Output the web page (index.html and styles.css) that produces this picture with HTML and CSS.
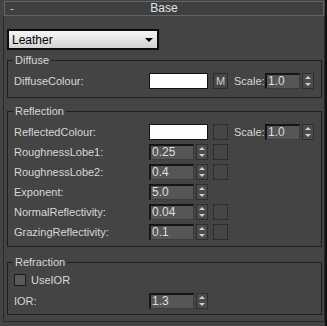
FILE: index.html
```html
<!DOCTYPE html>
<html lang="en">
<head>
    <meta charset="UTF-8">
    <meta name="viewport" content="width=device-width, initial-scale=1.0">
    <title>Base</title>
    <link rel="stylesheet" href="styles.css">
</head>
<body>
    <div class="panel">
        <div class="rollout-title">
            <span class="toggle">-</span>
            <span class="title">Base</span>
        </div>
        <div class="rollout-body">
            <div class="preset">
                <span>Leather</span>
                <span class="preset-arrow"></span>
            </div>

            <fieldset class="group diffuse">
                <legend>Diffuse</legend>
                <div class="row">
                    <span class="label">DiffuseColour:</span>
                    <span class="swatch"></span>
                    <span class="map-btn">M</span>
                    <span class="scale-label">Scale:</span>
                    <span class="spinner small"><span class="field">1.0</span><span class="arrows"></span></span>
                </div>
            </fieldset>

            <fieldset class="group reflection">
                <legend>Reflection</legend>
                <div class="row">
                    <span class="label">ReflectedColour:</span>
                    <span class="swatch"></span>
                    <span class="map-btn"></span>
                    <span class="scale-label">Scale:</span>
                    <span class="spinner small"><span class="field">1.0</span><span class="arrows"></span></span>
                </div>
                <div class="row">
                    <span class="label">RoughnessLobe1:</span>
                    <span class="spinner"><span class="field">0.25</span><span class="arrows"></span></span>
                    <span class="map-btn"></span>
                </div>
                <div class="row">
                    <span class="label">RoughnessLobe2:</span>
                    <span class="spinner"><span class="field">0.4</span><span class="arrows"></span></span>
                    <span class="map-btn"></span>
                </div>
                <div class="row">
                    <span class="label">Exponent:</span>
                    <span class="spinner"><span class="field">5.0</span><span class="arrows"></span></span>
                </div>
                <div class="row">
                    <span class="label">NormalReflectivity:</span>
                    <span class="spinner"><span class="field">0.04</span><span class="arrows"></span></span>
                    <span class="map-btn"></span>
                </div>
                <div class="row">
                    <span class="label">GrazingReflectivity:</span>
                    <span class="spinner"><span class="field">0.1</span><span class="arrows"></span></span>
                    <span class="map-btn"></span>
                </div>
            </fieldset>

            <fieldset class="group refraction">
                <legend>Refraction</legend>
                <label class="check-row">
                    <span class="checkbox"></span>
                    <span>UseIOR</span>
                </label>
                <div class="row">
                    <span class="label">IOR:</span>
                    <span class="spinner"><span class="field">1.3</span><span class="arrows"></span></span>
                </div>
            </fieldset>
        </div>
    </div>
</body>
</html>
```

FILE: styles.css
```css
html, body {
    margin: 0;
    padding: 0;
}
body {
    background-color: #111;
    font-family: "Liberation Sans", Arial, sans-serif;
    font-size: 11px;
    color: #d8d8d8;
}
.panel {
    width: 325px;
    height: 326px;
    background-color: #444;
    padding-top: 1px;
    box-sizing: border-box;
}
.rollout-title {
    display: flex;
    align-items: center;
    margin-left: 4px;
    width: 318px;
    height: 13px;
    border: 1px solid #646464;
    background-color: #3f3f3f;
}
.toggle {
    width: 12px;
    padding-left: 5px;
    line-height: 13px;
}
.title {
    flex: 1;
    text-align: center;
    margin-right: 17px;
    font-size: 12px;
    line-height: 13px;
    color: #dfe4ea;
}
.rollout-body {
    margin-left: 3px;
    width: 320px;
    border-left: 1px solid #2a2a2a;
    border-right: 1px solid #2a2a2a;
    border-bottom: 1px solid #2a2a2a;
    padding: 13px 0 6px;
}
.preset {
    margin-left: 3px;
    width: 145px;
    height: 17px;
    border: 2px solid #0c0c0c;
    background: linear-gradient(#f6f6f6, #d2d2d2);
    color: #000;
    font-size: 12px;
    display: flex;
    align-items: center;
    justify-content: space-between;
    padding-left: 3px;
}
.preset-arrow {
    width: 0;
    height: 0;
    margin-right: 4px;
    border-left: 4px solid transparent;
    border-right: 4px solid transparent;
    border-top: 4px solid #000;
}
.group {
    margin: 0 2px 0 3px;
    padding: 6px 0 8px 6px;
    border: 1px solid #1e1e1e;
    min-width: 0;
}
.group legend {
    padding: 0 2px;
    margin-left: -1px;
    line-height: 13px;
    color: #d8d8d8;
}
.diffuse {
    margin-top: 4px;
}
.reflection {
    margin-top: 7px;
    padding-bottom: 6px;
}
.refraction {
    margin-top: 9px;
    padding-top: 4px;
    padding-bottom: 5px;
}
.row {
    display: flex;
    align-items: center;
    height: 16px;
    margin-bottom: 4px;
}
.row:last-child {
    margin-bottom: 0;
}
.label {
    width: 135px;
    line-height: 16px;
}
.swatch {
    width: 57px;
    height: 14px;
    background-color: #fff;
    border: 1px solid #111;
    margin-right: 4px;
}
.map-btn {
    width: 13px;
    height: 14px;
    border: 1px solid #2c2c2c;
    background-color: #464646;
    margin-left: 1px;
    text-align: center;
    line-height: 14px;
    font-size: 11px;
    color: #d0d6dc;
}
.spinner + .map-btn {
    margin-left: 5px;
}
.scale-label {
    margin-left: 6px;
    width: 31px;
}
.spinner {
    display: flex;
    height: 16px;
}
.field {
    width: 41px;
    height: 13px;
    border-top: 2px solid #151515;
    border-left: 2px solid #151515;
    border-right: 1px solid #3c3c3c;
    border-bottom: 1px solid #3c3c3c;
    background-color: #565656;
    color: #d9dfe5;
    line-height: 13px;
    padding-left: 1px;
    font-size: 12px;
}
.small .field {
    width: 31px;
}
.arrows {
    width: 10px;
    height: 10px;
    margin-left: 2px;
    border: 1px solid #2e2e2e;
    background-color: #4b4b4b;
    display: flex;
    flex-direction: column;
    align-items: center;
    justify-content: space-between;
    padding: 2px 0;
}
.arrows::before {
    content: "";
    border-left: 3px solid transparent;
    border-right: 3px solid transparent;
    border-bottom: 3px solid #cfcfcf;
}
.arrows::after {
    content: "";
    border-left: 3px solid transparent;
    border-right: 3px solid transparent;
    border-top: 3px solid #cfcfcf;
}
.check-row {
    display: flex;
    align-items: center;
    height: 14px;
    margin-bottom: 6px;
}
.checkbox {
    width: 10px;
    height: 10px;
    border: 1px solid #1a1a1a;
    background-color: #5a5a5a;
    margin-right: 5px;
}
```
